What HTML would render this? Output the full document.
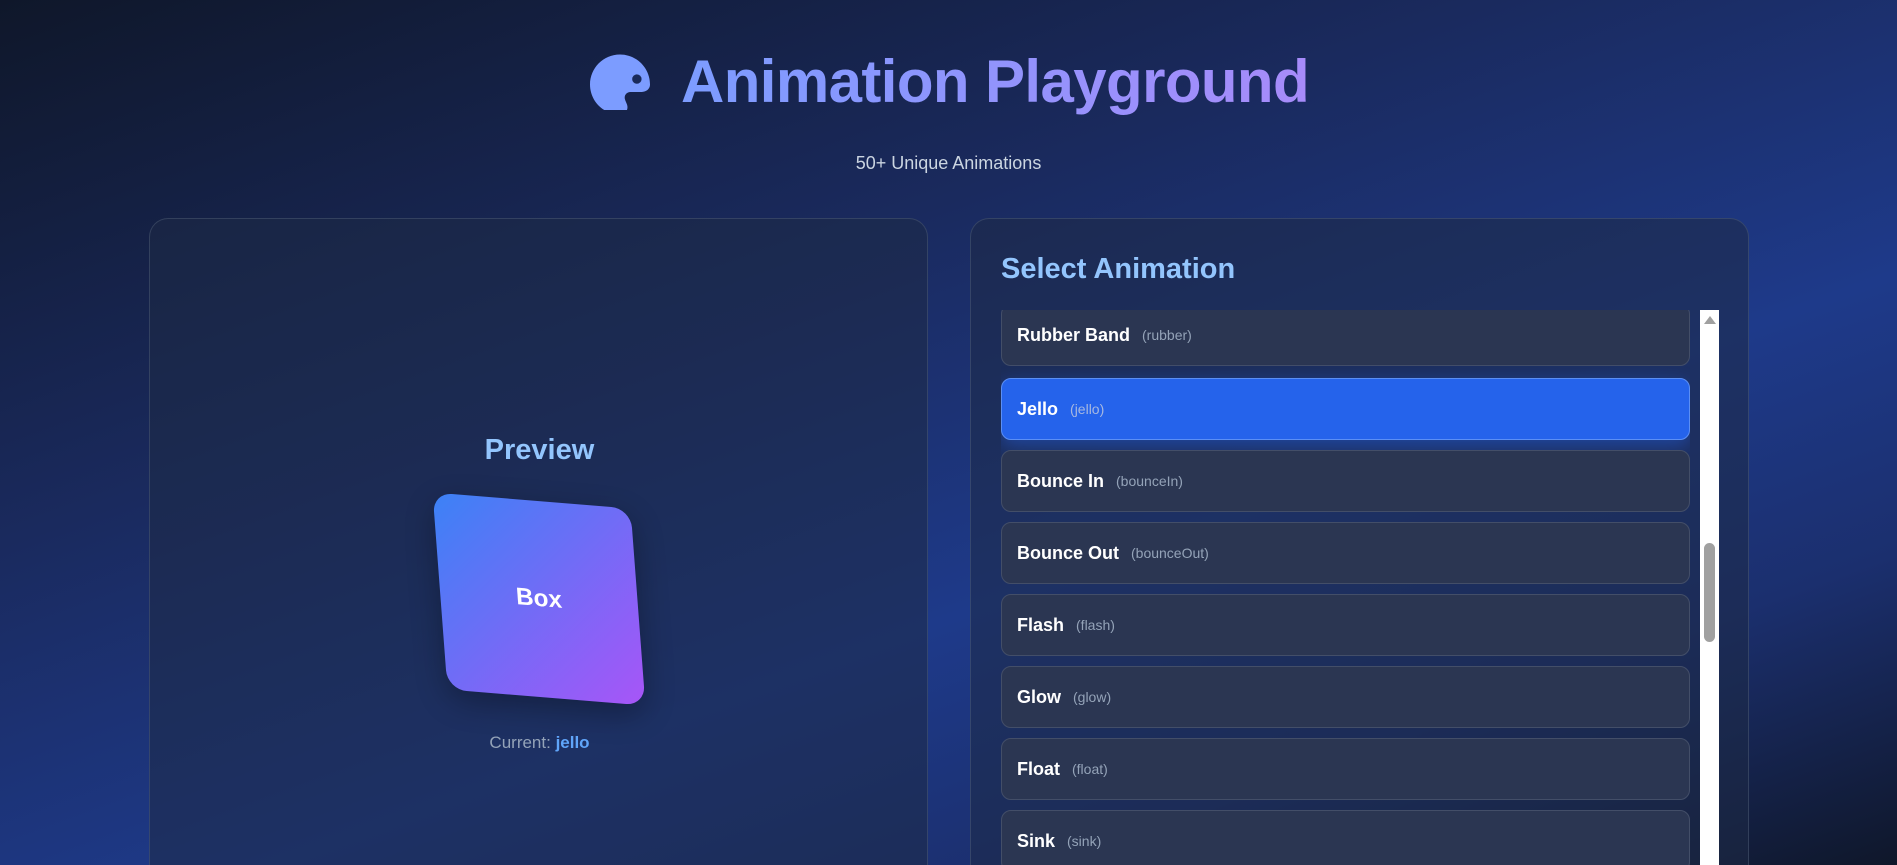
<!DOCTYPE html>
<html><head><meta charset="utf-8">
<style>
*{box-sizing:border-box;margin:0;padding:0}
html,body{width:1897px;height:865px;overflow:hidden}
body{font-family:"Liberation Sans","DejaVu Sans",sans-serif;
background:linear-gradient(160deg,#0f172a 0%,#1a2a5e 35%,#1e3a8a 62%,#1b2f6e 80%,#0f172a 100%);position:relative}
.ic{position:absolute;left:590px;top:54px}
h1{position:absolute;left:681px;top:42px;font-size:60px;font-weight:bold;letter-spacing:-0.6px;white-space:nowrap;
background:linear-gradient(90deg,#7c9cff,#a78bfa);-webkit-background-clip:text;background-clip:text;color:transparent;line-height:80px}
.sub{position:absolute;left:0;right:0;top:153px;text-align:center;color:#cbd5e1;font-size:18px}
.panel{position:absolute;top:218px;height:647px;border-radius:19px 19px 0 0;background:rgba(30,41,70,.55);border:1px solid rgba(100,116,139,.35);border-bottom:none;overflow:hidden}
.left{left:149px;width:779px}
.right{left:970px;width:779px}
.h{color:#93c5fd;font-size:29px;font-weight:bold}
.preview{position:absolute;left:0;width:779px;top:215px;text-align:center}
.box{position:absolute;left:291px;top:282px;width:196px;height:196px;border-radius:19px;
background:linear-gradient(135deg,#3b82f6,#a855f7);transform:matrix(1.01,0.082,0.076,1.005,0,0);
display:flex;align-items:center;justify-content:center;color:#fff;font-weight:bold;font-size:24px;box-shadow:0 10px 30px rgba(0,0,0,.3)}
.cur{position:absolute;left:0;width:779px;top:514px;text-align:center;color:#94a3b8;font-size:17px}
.cur b{color:#60a5fa}
.list{position:absolute;left:30px;top:91px;width:689px;height:556px;overflow:hidden}
.item{position:absolute;left:0;width:689px;height:62px;border-radius:10px;background:#2b3652;border:1px solid #434e68;
padding-left:15px;display:flex;align-items:center;color:#fff;font-weight:bold;font-size:18px}
.item span{font-weight:normal;font-size:14px;color:#94a3b8;margin-left:12px}
.item.act{background:#2563eb;border-color:#5b8ff5;box-shadow:0 6px 18px rgba(37,99,235,.45)}
.item.act span{color:#a7b8e0}
.sb{position:absolute;left:729px;top:91px;width:19px;height:556px;background:#fff}
.thumb{position:absolute;left:4px;top:233px;width:11px;height:99px;border-radius:6px;background:#a0a0a0}
.arr{position:absolute;left:4px;top:6px;width:0;height:0;border-left:6px solid transparent;border-right:6px solid transparent;border-bottom:8px solid #a0a0a0}
</style></head><body>
<svg class="ic" width="60" height="56" viewBox="0 0 512 470">
<path d="M512 256c0 .9 0 1.8 0 2.7c-.4 36.5-33.6 61.3-70.1 61.3H344c-26.5 0-48 21.5-48 48c0 3.4 .4 6.7 1 9.9c2.1 10.2 6.5 20 10.8 29.9c6.1 13.8 12.1 27.5 12.1 42c0 31.8-21.6 60.7-53.4 62c-3.5 .1-7 .2-10.6 .2C114.6 512 0 397.4 0 256S114.6 0 256 0S512 114.6 512 256z" fill="#7c9cff"/>
<circle cx="400" cy="210" r="40" fill="#1a2a5a"/>
</svg>
<h1>Animation Playground</h1>
<div class="sub">50+ Unique Animations</div>
<div class="panel left">
<div class="preview h">Preview</div>
<div class="box">Box</div>
<div class="cur">Current: <b>jello</b></div>
</div>
<div class="panel right">
<div class="h" style="position:absolute;left:30px;top:34px">Select Animation</div>
<div class="list">
<div class="item" style="top:-6px">Rubber Band<span>(rubber)</span></div>
<div class="item act" style="top:68px">Jello<span>(jello)</span></div>
<div class="item" style="top:140px">Bounce In<span>(bounceIn)</span></div>
<div class="item" style="top:212px">Bounce Out<span>(bounceOut)</span></div>
<div class="item" style="top:284px">Flash<span>(flash)</span></div>
<div class="item" style="top:356px">Glow<span>(glow)</span></div>
<div class="item" style="top:428px">Float<span>(float)</span></div>
<div class="item" style="top:500px">Sink<span>(sink)</span></div>
</div>
<div class="sb"><div class="arr"></div><div class="thumb"></div></div>
</div>
</body></html>
